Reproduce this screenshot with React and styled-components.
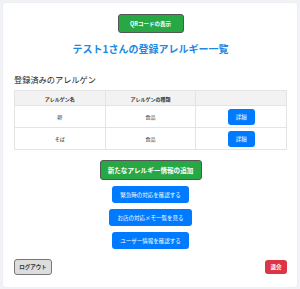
import React from "react";
import styled, { createGlobalStyle } from "styled-components";

const GlobalStyle = createGlobalStyle`
  body {
    margin: 0;
    background: #f0f2f5;
    font-family: "Noto Sans CJK JP", "Liberation Sans", sans-serif;
  }
`;

const allergens = [
  { name: "卵", kind: "食品" },
  { name: "そば", kind: "食品" },
];

function App() {
  return (
    <>
      <GlobalStyle />
      <Page>
        <Card>
          <Center>
            <GreenButton $small>QRコードの表示</GreenButton>
          </Center>
          <Title>テスト1さんの登録アレルギー一覧</Title>
          <SectionTitle>登録済みのアレルゲン</SectionTitle>
          <Table>
            <thead>
              <tr>
                <Th>アレルゲン名</Th>
                <Th>アレルゲンの種類</Th>
                <Th></Th>
              </tr>
            </thead>
            <tbody>
              {allergens.map((a, i) => (
                <tr key={i}>
                  <Td>{a.name}</Td>
                  <Td>{a.kind}</Td>
                  <Td>
                    <BlueButton $small>詳細</BlueButton>
                  </Td>
                </tr>
              ))}
            </tbody>
          </Table>
          <Actions>
            <GreenButton>新たなアレルギー情報の追加</GreenButton>
            <BlueButton>緊急時の対応を確認する</BlueButton>
            <BlueButton>お店の対応メモ一覧を見る</BlueButton>
            <BlueButton>ユーザー情報を確認する</BlueButton>
          </Actions>
          <Footer>
            <GrayButton>ログアウト</GrayButton>
            <RedButton>退会</RedButton>
          </Footer>
        </Card>
      </Page>
    </>
  );
}

const Page = styled.div`
  padding: 3px 3px 4px;
`;

const Card = styled.div`
  background: #fff;
  border-radius: 3px;
  padding: 11px 10px 12px 11px;
  box-shadow: 0 0 2px rgba(0, 0, 0, 0.05);
`;

const Center = styled.div`
  display: flex;
  justify-content: center;
`;

const GreenButton = styled.button`
  background: #28a745;
  color: #fff;
  font-family: inherit;
  font-weight: bold;
  font-size: ${(p) => (p.$small ? "5.5px" : "6.6px")};
  border: 1px solid #555;
  border-radius: 3px;
  padding: 0;
  width: ${(p) => (p.$small ? "66px" : "102px")};
  height: ${(p) => (p.$small ? "19px" : "20px")};
`;

const Title = styled.h1`
  margin: 9px 0 0;
  text-align: center;
  color: #1e88e5;
  font-size: 10px;
  font-weight: bold;
  line-height: 14px;
`;

const SectionTitle = styled.h2`
  margin: 17px 0 0;
  font-size: 8.2px;
  font-weight: normal;
  color: #222;
  line-height: 12px;
`;

const Table = styled.table`
  margin-top: 5px;
  width: 100%;
  border-collapse: collapse;
  table-layout: fixed;
  font-size: 5px;
  color: #333;
`;

const Th = styled.th`
  background: #f2f2f2;
  border: 1px solid #e4e4e4;
  height: 14px;
  padding: 0;
  font-weight: bold;
`;

const Td = styled.td`
  border: 1px solid #e4e4e4;
  height: 21px;
  padding: 0;
  text-align: center;
`;

const BlueButton = styled.button`
  background: #007bff;
  color: #fff;
  font-family: inherit;
  font-size: 5.5px;
  border: none;
  border-radius: 3px;
  padding: ${(p) => (p.$small ? "0" : "0 8px")};
  width: ${(p) => (p.$small ? "27px" : "auto")};
  height: ${(p) => (p.$small ? "16px" : "17px")};
  vertical-align: middle;
`;

const Actions = styled.div`
  margin-top: 10px;
  display: flex;
  flex-direction: column;
  align-items: center;
  gap: 6px;
`;

const Footer = styled.div`
  margin-top: 10px;
  display: flex;
  justify-content: space-between;
  align-items: center;
`;

const GrayButton = styled.button`
  background: #ddd;
  color: #333;
  font-family: inherit;
  font-weight: bold;
  font-size: 5.5px;
  border: 1px solid #777;
  border-radius: 3px;
  width: 38px;
  height: 16px;
  padding: 0;
`;

const RedButton = styled.button`
  background: #dc3545;
  color: #fff;
  font-family: inherit;
  font-weight: bold;
  font-size: 5.5px;
  border: none;
  border-radius: 3px;
  width: 22px;
  height: 14px;
  padding: 0;
`;

export default App;
